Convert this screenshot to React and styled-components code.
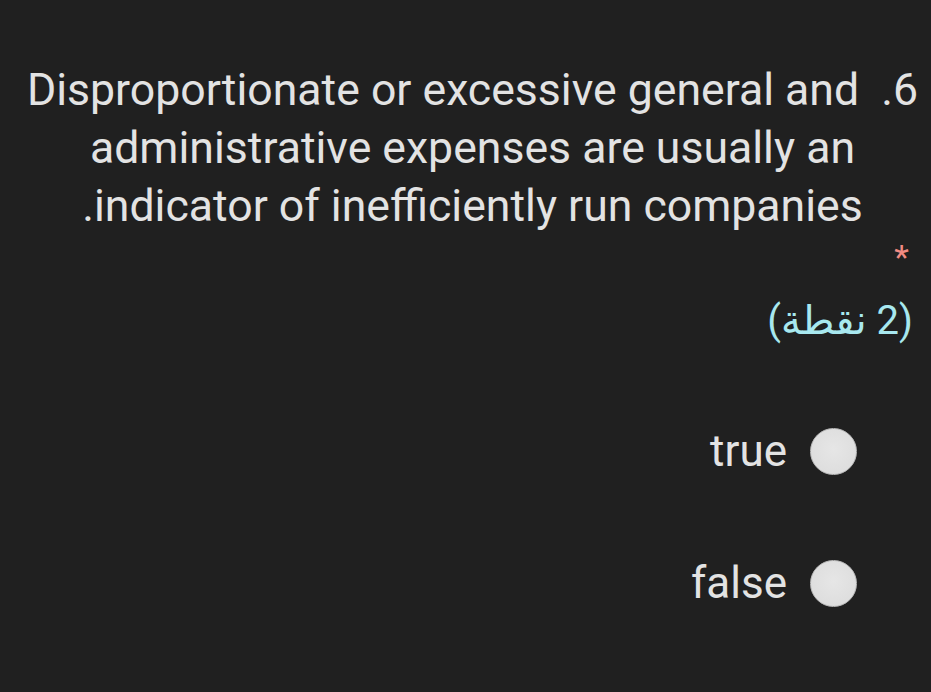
import React from "react";
import styled, { createGlobalStyle } from "styled-components";

const Global = createGlobalStyle`
  html, body { margin: 0; padding: 0; background: #202020; }
  body { font-family: Roboto, "DejaVu Sans", sans-serif; }
`;

const Page = styled.div`
  direction: rtl;
  min-height: 692px;
  background: #202020;
  color: #e3e3e3;
  padding-top: 61px;
  box-sizing: border-box;
`;

const Question = styled.div`
  font-size: 44.6px;
  line-height: 58px;
  text-align: center;
  padding: 0 5px 0 19px;
  color: #e3e3e3;
`;

const Required = styled.div`
  text-align: right;
  padding-right: 22px;
  margin-top: 2px;
  color: #f28b82;
  font-size: 34px;
  line-height: 40px;
  height: 40px;
`;

const Points = styled.div`
  text-align: right;
  padding-right: 18px;
  margin-top: 20px;
  color: #a8e8ef;
  font-size: 40px;
  line-height: 48px;
`;

const Options = styled.div`
  display: flex;
  flex-direction: column;
  gap: 84px;
  margin-top: 82px;
  padding-right: 74px;
`;

const Option = styled.label`
  display: flex;
  align-items: center;
  gap: 23px;
  height: 48px;
  font-size: 44px;
  color: #e3e3e3;
`;

const Radio = styled.span`
  width: 47px;
  height: 47px;
  border-radius: 50%;
  box-sizing: border-box;
  background: radial-gradient(circle at 50% 45%, #e6e6e6 0%, #dedede 70%, #cfcfcf 100%);
  border: 1px solid #bdbdbd;
  flex: none;
`;

export default function App() {
  return (
    <>
      <Global />
      <Page>
        <Question>
          {"6.\u00a0 Disproportionate or excessive general and administrative expenses are usually an indicator of inefficiently run companies."}
        </Question>
        <Required>*</Required>
        <Points>(2 نقطة)</Points>
        <Options>
          <Option>
            <Radio />
            <span>true</span>
          </Option>
          <Option>
            <Radio />
            <span>false</span>
          </Option>
        </Options>
      </Page>
    </>
  );
}
